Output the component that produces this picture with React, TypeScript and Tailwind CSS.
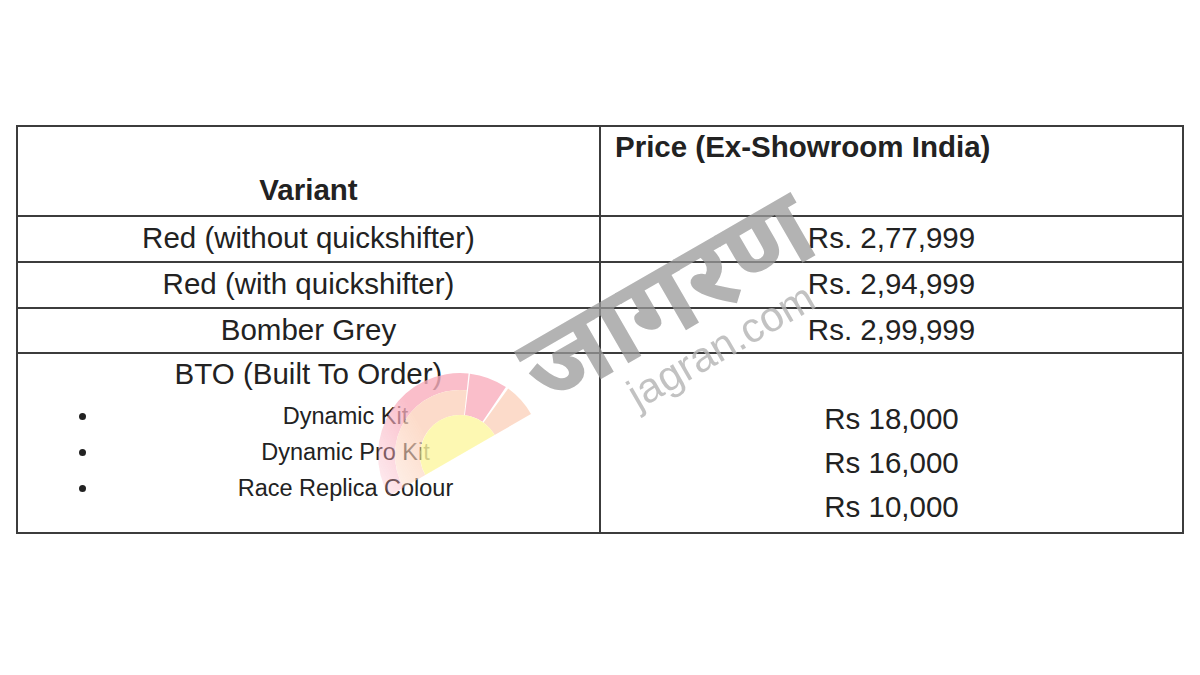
import React from "react";

const font = { fontFamily: '"Liberation Sans", Arial, sans-serif' };

export default function App() {
  return (
    <div className="relative w-[1200px] h-[675px] bg-white overflow-hidden text-[#222]" style={font}>
      <div className="pt-[125px] pl-[16px]">
        <table className="border-collapse w-[1166px] table-fixed">
          <tbody>
            <tr className="h-[90px]">
              <td className="w-[583px] border-2 border-[#3c3c3c] align-bottom text-center pb-[9px] text-[29.5px] leading-[33px] font-bold">
                Variant
              </td>
              <td className="w-[583px] border-2 border-[#3c3c3c] align-top text-left pl-[14px] pt-[3px] text-[29.5px] leading-[33px] font-bold">
                Price (Ex-Showroom India)
              </td>
            </tr>
            <tr className="h-[46px]">
              <td className="border-2 border-[#3c3c3c] text-center text-[29.5px] leading-[33px] p-0 pb-[3px]">Red (without quickshifter)</td>
              <td className="border-2 border-[#3c3c3c] text-center text-[29.5px] leading-[33px] p-0 pb-[3px]">Rs. 2,77,999</td>
            </tr>
            <tr className="h-[46px]">
              <td className="border-2 border-[#3c3c3c] text-center text-[29.5px] leading-[33px] p-0 pb-[3px]">Red (with quickshifter)</td>
              <td className="border-2 border-[#3c3c3c] text-center text-[29.5px] leading-[33px] p-0 pb-[3px]">Rs. 2,94,999</td>
            </tr>
            <tr className="h-[45px]">
              <td className="border-2 border-[#3c3c3c] text-center text-[29.5px] leading-[33px] p-0 pb-[3px]">Bomber Grey</td>
              <td className="border-2 border-[#3c3c3c] text-center text-[29.5px] leading-[33px] p-0 pb-[3px]">Rs. 2,99,999</td>
            </tr>
            <tr className="h-[180px]">
              <td className="border-2 border-[#3c3c3c] align-top p-0">
                <div className="pt-[3px] text-center text-[29.5px] leading-[33px]">BTO (Built To Order)</div>
                <ul className="mt-[8px] ml-[82px] mr-[8px] list-disc text-[23.5px] leading-[36px] text-center">
                  <li>Dynamic Kit</li>
                  <li>Dynamic Pro Kit</li>
                  <li>Race Replica Colour</li>
                </ul>
              </td>
              <td className="border-2 border-[#3c3c3c] align-top p-0">
                <div className="pt-[43px] flex flex-col items-center text-[29.5px] leading-[44px]">
                  <div>Rs 18,000</div>
                  <div>Rs 16,000</div>
                  <div>Rs 10,000</div>
                </div>
              </td>
            </tr>
          </tbody>
        </table>
      </div>

      {/* watermark sun */}
      <svg className="absolute left-[360px] top-[355px] pointer-events-none opacity-80" width="200" height="200" viewBox="-100 -100 200 200">
        <defs>
          <linearGradient id="fadeL" gradientUnits="userSpaceOnUse" x1="-20" y1="0" x2="-85" y2="0">
            <stop offset="0" stopColor="#ffffff" stopOpacity="1" />
            <stop offset="1" stopColor="#ffffff" stopOpacity="0.3" />
          </linearGradient>
          <mask id="fadeMask">
            <rect x="-100" y="-100" width="200" height="200" fill="url(#fadeL)" />
          </mask>
        </defs>
        <g transform="rotate(-30)">
          <g mask="url(#fadeMask)">
            <path d="M48.2 -66.3 A82 82 0 0 0 -82 0 L-65 0 A65 65 0 0 1 38.2 -52.6 Z" fill="#f9aebd" />
            <path d="M38.2 -52.6 A65 65 0 0 0 -65 0 L-40 0 A40 40 0 0 1 23.5 -32.4 Z" fill="#fcd3bd" />
          </g>
          <path d="M36.0 -17.5 L73.7 -35.9 A82 82 0 0 0 49.3 -65.5 L24.1 -31.9 A40 40 0 0 1 36.0 -17.5 Z" fill="#f9aebd" />
          <path d="M40 0 L82 0 A82 82 0 0 0 74.9 -33.4 L36.5 -16.3 A40 40 0 0 1 40 0 Z" fill="#fcd3bd" />
          <path d="M-40 0 A40 40 0 0 1 40 0 Z" fill="#fdf7a0" />
        </g>
      </svg>

      {/* watermark logo */}
      <div
        className="absolute left-[672px] top-[308px] pointer-events-none text-[#9a9a9a] opacity-75 font-bold text-[108px] leading-none whitespace-nowrap"
        style={{ transform: "translate(-50%, -50%) rotate(-30deg)", fontFamily: '"Noto Sans Devanagari", "Lohit Devanagari", "Noto Sans", sans-serif' }}
      >
        जागरण
      </div>
      <div
        className="absolute left-[721px] top-[346px] pointer-events-none text-[#b4b4b4] opacity-80 text-[42px] leading-none whitespace-nowrap"
        style={{ transform: "translate(-50%, -50%) rotate(-30deg)", ...font }}
      >
        jagran.com
      </div>
    </div>
  );
}
